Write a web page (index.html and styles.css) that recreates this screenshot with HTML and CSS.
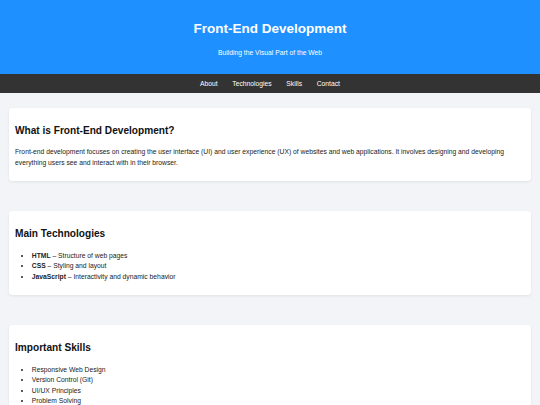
FILE: index.html
```html
<!DOCTYPE html>
<html lang="en">
<head>
    <meta charset="UTF-8">
    <meta name="viewport" content="width=device-width, initial-scale=1.0">
    <title>Front-End Development</title>
    <link rel="stylesheet" href="styles.css">
</head>
<body>
    <header class="site-header">
        <h1>Front-End Development</h1>
        <p>Building the Visual Part of the Web</p>
    </header>

    <nav class="site-nav">
        <a href="#about">About</a>
        <a href="#technologies">Technologies</a>
        <a href="#skills">Skills</a>
        <a href="#contact">Contact</a>
    </nav>

    <main class="content">
        <section class="card" id="about">
            <h2>What is Front-End Development?</h2>
            <p>Front-end development focuses on creating the user interface (UI) and user experience (UX) of websites and web applications. It involves designing and developing everything users see and interact with in their browser.</p>
        </section>

        <section class="card" id="technologies">
            <h2 class="list-title">Main Technologies</h2>
            <ul>
                <li><strong>HTML</strong> – Structure of web pages</li>
                <li><strong>CSS</strong> – Styling and layout</li>
                <li><strong>JavaScript</strong> – Interactivity and dynamic behavior</li>
            </ul>
        </section>

        <section class="card" id="skills">
            <h2 class="list-title">Important Skills</h2>
            <ul>
                <li>Responsive Web Design</li>
                <li>Version Control (Git)</li>
                <li>UI/UX Principles</li>
                <li>Problem Solving</li>
            </ul>
        </section>
    </main>
</body>
</html>
```

FILE: styles.css
```css
body {
    font-family: "Liberation Sans", Arial, sans-serif;
    font-size: 6.75px;
    margin: 0;
    padding: 0;
    background-color: #f3f4f7;
    color: #222;
}
.site-header {
    background-color: #1e90ff;
    color: #fff;
    text-align: center;
    padding: 20.5px 10px 17.5px;
}
.site-header h1 {
    font-size: 13.5px;
    line-height: 15.5px;
    margin: 0 0 12.8px;
}
.site-header p {
    margin: 0;
    line-height: 7.75px;
}
.site-nav {
    background-color: #333;
    display: flex;
    justify-content: center;
    gap: 14.6px;
    padding: 5.6px 0;
    line-height: 7.75px;
}
.site-nav a {
    color: #fff;
    text-decoration: none;
}
.content {
    display: flex;
    flex-direction: column;
    gap: 30px;
    padding: 15px 9px 20px 8.5px;
}
.card {
    background-color: #fff;
    border-radius: 3.4px;
    box-shadow: 0 1px 3px rgba(0, 0, 0, 0.08);
    padding: 8.5px 6.5px;
}
.card h2 {
    font-size: 10.125px;
    line-height: 11.6px;
    margin: 8.5px 0 9.4px;
    color: #111;
}
.card h2.list-title {
    margin-bottom: 10.8px;
}
.card p {
    line-height: 11.3px;
    margin: 0 0 4.4px;
    color: #222;
}
.card ul {
    margin: 0 0 4.6px;
    padding-left: 16.8px;
    line-height: 10.5px;
}
```
